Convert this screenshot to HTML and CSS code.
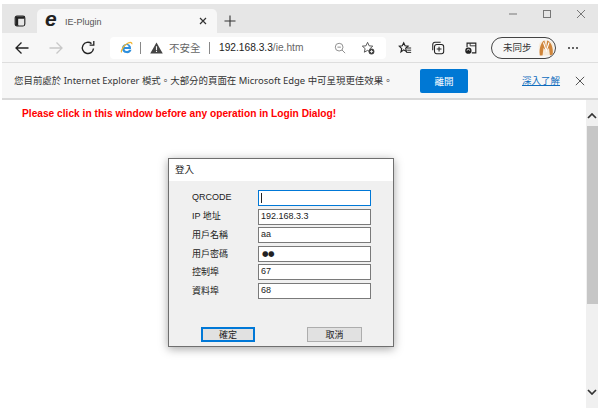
FILE: index.html
```html
<!DOCTYPE html>
<html lang="zh-Hant">
<head>
<meta charset="utf-8">
<title>IE-Plugin</title>
<link rel="stylesheet" href="styles.css">
</head>
<body>
<div class="browser">
  <div class="tabstrip">
    <div class="tab-actions">
      <svg class="i16" viewBox="0 0 16 16"><rect x="2.5" y="2.5" width="11" height="11" rx="2" fill="none" stroke="#222" stroke-width="1.3"/><path d="M3 3h10v2.500H3zM3 5.500h3v7.500H3z" fill="#222"/><rect x="6.500" y="6" width="6" height="7" fill="#e6e6e6"/></svg>
    </div>
    <div class="tab">
      <span class="tab-e">e</span>
      <span class="tab-title">IE-Plugin</span>
      <svg class="tab-close" viewBox="0 0 10 10"><path d="M2 2l6 6M8 2l-6 6" stroke="#333" stroke-width="1.200"/></svg>
    </div>
    <svg class="plus" viewBox="0 0 12 12"><path d="M6 .5v11M.5 6h11" stroke="#333" stroke-width="1.100"/></svg>
    <div class="win-controls">
      <svg class="wc" viewBox="0 0 10 10"><path d="M1 5h8" stroke="#777" stroke-width="1"/></svg>
      <svg class="wc" viewBox="0 0 10 10"><rect x="1.500" y="1.500" width="7" height="7" fill="none" stroke="#777"/></svg>
      <svg class="wc" viewBox="0 0 10 10"><path d="M1 1l8 8M9 1l-8 8" stroke="#777" stroke-width="1"/></svg>
    </div>
  </div>

  <div class="toolbar">
    <svg class="nav" viewBox="0 0 16 16"><path d="M14.500 8H2M7.500 2.500L2 8l5.500 5.500" fill="none" stroke="#222" stroke-width="1.300"/></svg>
    <svg class="nav nav-fwd" viewBox="0 0 16 16"><path d="M1.500 8H14M8.500 2.500L14 8l-5.500 5.500" fill="none" stroke="#c8c8c8" stroke-width="1.300"/></svg>
    <svg class="nav nav-reload" viewBox="0 0 16 16"><path d="M13.500 8.500A5.600 5.600 0 1 1 11.500 3.600" fill="none" stroke="#222" stroke-width="1.400"/><path d="M13.800 1v4.200H9.600" fill="none" stroke="#222" stroke-width="1.300"/></svg>
    <div class="address">
      <svg class="ie-logo" viewBox="0 0 16 16"><path d="M2.500 9.500a5.700 5.700 0 0 1 10.800-2.800l.3 3H5.500a3 3 0 0 0 5.700 1h3a6 6 0 0 1-11.700-1.200z" fill="#2f8fdc"/><path d="M5.600 7.500h5a2.500 2.500 0 0 0-5 0z" fill="#fff"/><path d="M2 14c-1.500-2 3-9 8-11.500 3-1.300 5-.8 4.500 1.500" fill="none" stroke="#f2b632" stroke-width="1.500"/></svg>
      <span class="sep sep-a"></span>
      <svg class="warn" viewBox="0 0 14 13"><path d="M7 .5L13.800 12.500H.2z" fill="#444"/><path d="M6.400 4.500h1.200v4.200H6.400zM6.400 9.600h1.200v1.200H6.400z" fill="#f7f7f7"/></svg>
      <span class="unsafe">不安全</span>
      <span class="sep sep-b"></span>
      <span class="url">192.168.3.3<span class="url-path">/ie.htm</span></span>
      <svg class="zoom-ic" viewBox="0 0 14 14"><circle cx="6" cy="6" r="4.500" fill="none" stroke="#8a8a8a" stroke-width="1.100"/><path d="M9.300 9.300L13 13M4 6h4" stroke="#8a8a8a" stroke-width="1.100"/></svg>
      <svg class="fav-ic" viewBox="0 0 16 16"><path d="M7.500 1.500l1.800 4 4.200.4-3.200 2.800.9 4.100-3.700-2.100-3.700 2.100.9-4.100L1.500 5.900l4.200-.4z" fill="none" stroke="#555" stroke-width="1.100"/><circle cx="12" cy="12" r="3.300" fill="#444"/><path d="M12 10.300v3.400M10.300 12h3.400" stroke="#fff" stroke-width=".9"/></svg>
    </div>
    <div class="tools">
      <svg class="tool" viewBox="0 0 16 16"><path d="M6.500 2l1.600 3.500 3.400.4-2.700 2.400.8 3.700-3.100-1.900L3.400 12.500l.8-3.700L1.500 5.900l3.400-.4z" fill="none" stroke="#222" stroke-width="1.300"/><path d="M10 8h5M10.500 10.500h4.500M9.500 13h5.500" stroke="#222" stroke-width="1.100"/></svg>
      <svg class="tool" viewBox="0 0 16 16"><rect x="4" y="4" width="10.500" height="10.500" rx="2.500" fill="none" stroke="#222" stroke-width="1.200"/><path d="M2 10.500V4a2.500 2.500 0 0 1 2.500-2.500H11" fill="none" stroke="#222" stroke-width="1.200"/><path d="M9.200 6.500v5.500M6.500 9.200H12" stroke="#222" stroke-width="1.200"/></svg>
      <svg class="tool" viewBox="0 0 16 16"><path d="M3.500 7V2.500h10v11H9" fill="none" stroke="#222" stroke-width="1.300"/><path d="M7 2.500v3M13.500 5.500H7" stroke="#222" stroke-width="1"/><circle cx="5" cy="11" r="3.600" fill="#222"/><path d="M3.500 11a1.500 1.500 0 0 1 3 0" fill="none" stroke="#f7f7f7"/></svg>
    </div>
    <div class="profile">
      <span class="profile-text">未同步</span>
      <svg class="avatar" viewBox="0 0 20 20"><rect x="2" y="2" width="16" height="16" rx="6" fill="#f7ead9"/><path d="M3 18C2 10 5 3 8 2l2 8 1-8c4 1 7 8 6 15l-3 1-1-8-3 3-3-3-1 8z" fill="#cf8439"/><path d="M7 4l3 9 3-9" fill="none" stroke="#fff" stroke-width="1.200"/></svg>
    </div>
    <div class="dots"><i></i><i></i><i></i></div>
  </div>

  <div class="infobar">
    <span class="info-text">您目前處於 Internet Explorer 模式。大部分的頁面在 Microsoft Edge 中可呈現更佳效果。</span>
    <button class="leave" type="button">離開</button>
    <a class="learn" href="#">深入了解</a>
    <svg class="info-close" viewBox="0 0 12 12"><path d="M1 1l10 10M11 1L1 11" stroke="#444" stroke-width="1.100"/></svg>
  </div>

  <div class="content">
    <div class="page">
      <p class="notice">Please click in this window before any operation in Login Dialog!</p>
      <div class="dialog">
        <div class="dialog-title">登入</div>
        <div class="dialog-body">
          <div class="form">
            <label class="lbl lbl-up">QRCODE</label><div class="field field-focus"><span class="caret"></span></div>
            <label class="lbl lbl-up">IP 地址</label><div class="field">192.168.3.3</div>
            <label class="lbl">用戶名稱</label><div class="field">aa</div>
            <label class="lbl">用戶密碼</label><div class="field field-pw">●●</div>
            <label class="lbl">控制埠</label><div class="field">67</div>
            <label class="lbl">資料埠</label><div class="field">68</div>
          </div>
          <div class="dialog-buttons">
            <button class="btn btn-default" type="button">確定</button>
            <button class="btn" type="button">取消</button>
          </div>
        </div>
      </div>
    </div>
    <div class="scrollbar">
      <svg class="arrow arrow-up" viewBox="0 0 10 6"><path d="M1 5l4-4 4 4" fill="none" stroke="#333" stroke-width="1.700"/></svg>
      <div class="track"><div class="thumb"></div></div>
      <svg class="arrow arrow-down" viewBox="0 0 10 6"><path d="M1 1l4 4 4-4" fill="none" stroke="#333" stroke-width="1.700"/></svg>
    </div>
  </div>
</div>
</body>
</html>
```

FILE: styles.css
```css
* { box-sizing: border-box; }
html, body { margin: 0; height: 100%; background: #fff; overflow: hidden; }
body {
  padding: 4px 2px 0;
  font-family: "Liberation Sans", "Noto Sans CJK TC", sans-serif;
  color: #222;
}
.browser { display: flex; flex-direction: column; height: 404px; }

.tabstrip {
  height: 29px;
  flex: none;
  background: #e6e6e6;
  display: flex;
  align-items: flex-end;
}
.tab-actions { width: 35px; height: 24px; display: flex; align-items: center; justify-content: center; }
.i16 { width: 14px; height: 14px; }
.tab {
  width: 180px;
  height: 24px;
  background: #f7f7f7;
  border-radius: 5px 5px 0 0;
  display: flex;
  align-items: center;
  padding: 0 9px 0 8px;
}
.tab-e {
  font: italic bold 21px/20px "Liberation Sans", sans-serif;
  color: #222;
  width: 12px;
  margin-right: 8px;
  transform: translateY(-2px);
}
.tab-title { flex: 1; font: 9px/14px "Liberation Sans", sans-serif; color: #555; padding-top: 1px; }
.tab-close { width: 10px; height: 10px; }
.plus { width: 12px; height: 12px; margin: 0 0 6px 7px; }
.win-controls { margin-left: auto; height: 29px; display: flex; align-items: center; gap: 24px; padding: 0 12px 0 0; transform: translateY(-5px); }
.wc { width: 10px; height: 10px; }

.toolbar {
  height: 30px;
  flex: none;
  background: #f7f7f7;
  border-bottom: 1px solid #dedede;
  display: flex;
  align-items: center;
  padding-left: 12px;
}
.nav { width: 16px; height: 16px; flex: none; }
.nav-fwd { margin-left: 18px; }
.nav-reload { margin-left: 16px; }
.address {
  margin-left: 14px;
  width: 276px;
  height: 22px;
  background: #fff;
  border-radius: 4px;
  display: flex;
  align-items: center;
  padding-left: 10px;
  flex: none;
}
.ie-logo { width: 13px; height: 13px; flex: none; }
.sep { width: 1px; height: 12px; background: #888; flex: none; }
.sep-a { margin-left: 7px; }
.warn { width: 13px; height: 12px; margin-left: 9px; flex: none; }
.unsafe { font-size: 10.500px; color: #666; margin-left: 6px; line-height: 14px; width: 32px; white-space: nowrap; }
.sep-b { margin-left: 8px; }
.url { margin-left: 9px; font: 10.200px/14px "Liberation Sans", sans-serif; color: #222; white-space: nowrap; width: 115px; }
.url-path { color: #666; }
.zoom-ic { width: 12px; height: 12px; flex: none; }
.fav-ic { width: 14px; height: 14px; margin-left: 15px; flex: none; }
.tools { display: flex; gap: 19px; margin-left: 12px; }
.tool { width: 14px; height: 14px; }
.profile {
  margin-left: 13px;
  width: 65px;
  height: 22px;
  border: 1px solid #444;
  border-radius: 11px;
  display: flex;
  align-items: center;
  padding-left: 11px;
  flex: none;
}
.profile-text { font-size: 9.500px; line-height: 12px; color: #333; white-space: nowrap; }
.avatar { width: 20px; height: 20px; margin-left: 5px; }
.dots { display: flex; gap: 2px; margin-left: 12px; }
.dots i { width: 2px; height: 2px; background: #333; border-radius: 50%; }

.infobar {
  height: 37px;
  flex: none;
  background: #f7f7f7;
  border-bottom: 2px solid #d9d9d9;
  display: flex;
  align-items: center;
  padding-left: 12px;
}
.info-text { width: 406px; font: 9.450px/14px "Noto Sans", "Noto Sans CJK TC", sans-serif; color: #333; white-space: nowrap; }
.leave {
  width: 48px;
  height: 24px;
  background: #0078d4;
  color: #fff;
  border: 0;
  border-radius: 2px;
  font: 9.500px/12px "Noto Sans CJK TC", sans-serif;
  padding: 0;
  flex: none;
}
.learn { margin-left: 54px; font-size: 9.500px; line-height: 12px; color: #0f6cbd; white-space: nowrap; text-decoration: underline; }
.info-close { width: 10px; height: 10px; margin-left: 15px; flex: none; }

.content { flex: 1; display: flex; min-height: 0; background: #fff; }
.page { flex: 1; position: relative; }
.notice {
  margin: 7px 0 0 20px;
  font: bold 10.200px/14px "Liberation Sans", sans-serif;
  color: #f00;
  white-space: nowrap;
}
.dialog {
  position: absolute;
  left: 166px;
  top: 58px;
  width: 226px;
  height: 189px;
  background: #f0f0f0;
  border: 1px solid #6f6f6f;
  box-shadow: 0 2px 9px rgba(0,0,0,.35);
  display: flex;
  flex-direction: column;
}
.dialog-title {
  height: 22px;
  flex: none;
  background: #fff;
  font-size: 9.500px;
  line-height: 22px;
  padding-left: 6px;
  color: #222;
}
.dialog-body { flex: 1; display: flex; flex-direction: column; }
.form {
  display: grid;
  grid-template-columns: 66px 113px;
  grid-auto-rows: 16px;
  row-gap: 2.600px;
  padding: 9px 0 0 23px;
  align-items: center;
}
.lbl { font-size: 9px; line-height: 12px; color: #222; }
.lbl-up { transform: translateY(-1px); }
.field {
  height: 16px;
  background: #fff;
  border: 1px solid #7a7a7a;
  font: 9px/13px "Liberation Sans", sans-serif;
  padding-left: 2px;
  color: #222;
  overflow: hidden;
}
.field-focus { border-color: #0078d7; }
.field-pw { font: 7.500px/13px "DejaVu Sans", sans-serif; letter-spacing: -.6px; padding-left: 3px; }
.caret { display: block; width: 1px; height: 10px; margin-top: 2px; background: #222; }
.dialog-buttons {
  margin-top: auto;
  display: flex;
  justify-content: space-between;
  padding: 0 31px 4px 32px;
}
.btn {
  width: 55px;
  height: 15px;
  background: #e1e1e1;
  border: 1px solid #adadad;
  font: 9px/12px "Noto Sans CJK TC", sans-serif;
  color: #222;
  padding: 0;
}
.btn-default { width: 54px; border: 2px solid #0078d7; }

.scrollbar {
  width: 12px;
  flex: none;
  background: #f0f0f0;
  display: flex;
  flex-direction: column;
  align-items: center;
}
.arrow { width: 10px; height: 6px; flex: none; }
.arrow-up { margin: 13px 0 7px; }
.arrow-down { margin: 0 0 13px; }
.track { flex: 1; width: 100%; padding-left: 1px; }
.thumb { height: 178px; background: #c6c6c6; }
```
